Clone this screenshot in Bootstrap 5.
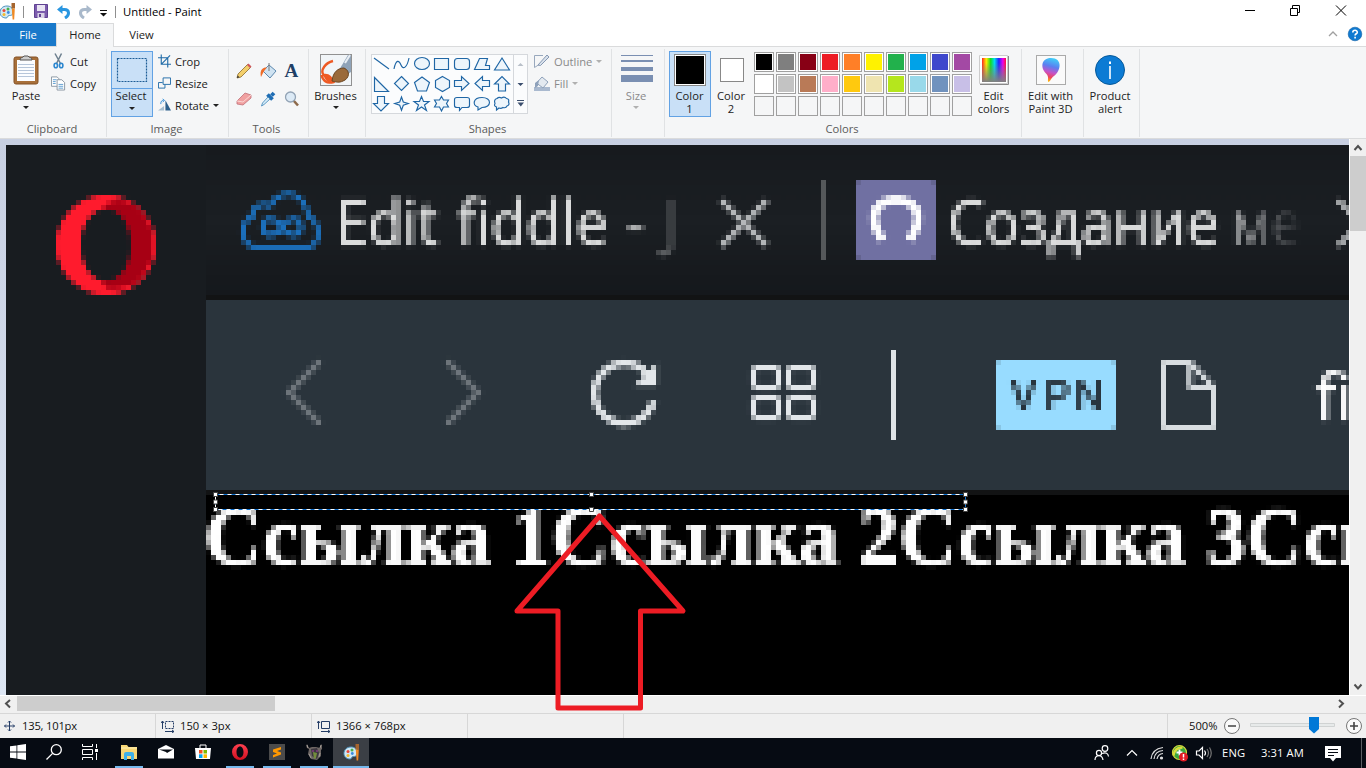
<!DOCTYPE html>
<html lang="en">
<head>
<meta charset="utf-8">
<title>Untitled - Paint</title>
<link href="https://cdn.jsdelivr.net/npm/bootstrap@5.3.0/dist/css/bootstrap.min.css" rel="stylesheet">
<script src="https://cdn.jsdelivr.net/npm/bootstrap@5.3.0/dist/js/bootstrap.bundle.min.js"></script>
<style>
body{width:1366px;height:768px;overflow:hidden;font-family:"Open Sans","Noto Sans",sans-serif;font-size:11.2px;line-height:13px;color:#222;background:#fff}
svg{display:block;flex:none}
.titlebar{height:23px;color:#000}
.titlebar .cap{font-size:11.3px}
.vline{width:1px;height:12px;background:#8f8f8f}
.tabstrip{height:24px;border-bottom:1px solid #dadbdc}
.rtab{height:24px;line-height:23px;text-align:center}
.rtab.file{width:56px;background:#1979ca;color:#fff;height:23px}
.rtab.on{width:58px;background:#f5f6f7;border:1px solid #dadbdc;border-bottom:0;line-height:21px}
.rtab.view{width:55px}
.ribbon{height:92px;background:#f5f6f7;border-bottom:1px solid #dadbdc}
.grp{height:88px;margin-top:2px;border-right:1px solid #e0e2e4}
.grp .inner{height:73px;padding-top:5px}
.grp .gname{text-align:center;color:#5a5a5a;height:13px;padding-right:2px}
.tool{text-align:center;display:flex;flex-direction:column;align-items:center}
.tool .ic{height:35px;display:flex;align-items:flex-start;justify-content:center}
.row-i{height:22px;display:flex;align-items:center;white-space:nowrap}
.row-i svg{margin-right:4px}
.caret{width:0;height:0;border:3px solid transparent;border-top-color:#222;border-bottom:0}
.dis{color:#8a8a8a}.dis .caret{border-top-color:#b0b0b0}
.pickd{background:#c9e0f7;outline:1px solid #62a2e4;outline-offset:-1px}
.palette{display:grid;grid-template-columns:repeat(10,20px);grid-auto-rows:20px;gap:2px}
.palette i{border:1px solid #a0a0a0;padding:1px;background-clip:content-box}
.palette i.e{background:none}
.palette i:not(.e){outline:1px solid #fff;outline-offset:-2px}
.work{height:556px;background:linear-gradient(#c8d0e2,#dde6f3)}
.vscroll{width:17px;background:#f0f0f0;border-left:1px solid #fff}
.vscroll .knob{height:75px;background:#cdcdcd}
.hscroll{height:18px;background:#f0f0f0;border-top:1px solid #fff}
.hscroll .knob{width:258px;height:15px;background:#cdcdcd}
.status{height:25px;background:#f0f0f0;border-top:1px solid #d7d7d7;color:#111}
.status .cell{height:24px;border-right:1px solid #d7d7d7}
.status span{margin-top:-2px}
.task{height:30px;background:#060b13;color:#fff}
.task span{margin-top:-2px}
.tb{width:37px;height:30px;display:flex;align-items:center;justify-content:center;border-bottom:2px solid transparent}
.tb.run{width:28px;margin:0 4.5px;border-color:#76b9ed}
.tb.act{width:36px;margin:0 0 0 .5px;background:#3b3f45;border-color:#76b9ed}
.annot{left:510px;top:505px;pointer-events:none}
</style>
</head>
<body class="d-flex flex-column position-relative">

<svg width="0" height="0" class="position-absolute">
 <defs>
  <filter id="px" filterUnits="userSpaceOnUse" primitiveUnits="userSpaceOnUse" x="6" y="145" width="1345" height="550" color-interpolation-filters="sRGB">
   <feGaussianBlur in="SourceGraphic" stdDeviation="1.1" result="soft"/>
   <feFlood x="8" y="147" width="1" height="1" flood-color="#000" result="dot"/>
   <feComposite in="dot" in2="dot" operator="over" x="6" y="145" width="5" height="5"/>
   <feTile x="6" y="145" width="1345" height="550" result="grid"/>
   <feComposite in="soft" in2="grid" operator="in" x="6" y="145" width="1345" height="550"/>
   <feMorphology operator="dilate" radius="2"/>
  </filter>
  <linearGradient id="bar" x1="0" y1="0" x2="0" y2="1"><stop offset="0" stop-color="#171a1e"/><stop offset=".5" stop-color="#1b1f23"/><stop offset="1" stop-color="#15181c"/></linearGradient>
  <linearGradient id="opr" x1="0" y1="0" x2="0" y2="1"><stop offset="0" stop-color="#ff4050"/><stop offset="1" stop-color="#d01020"/></linearGradient>
  <linearGradient id="fade1" gradientUnits="userSpaceOnUse" x1="615" y1="0" x2="690" y2="0"><stop offset="0" stop-color="#dcdddd"/><stop offset="1" stop-color="#1a1e22"/></linearGradient>
  <linearGradient id="fade2" gradientUnits="userSpaceOnUse" x1="1215" y1="0" x2="1303" y2="0"><stop offset="0" stop-color="#d0d1d2"/><stop offset="1" stop-color="#1a1e22"/></linearGradient>
  <linearGradient id="rain"><stop offset="0" stop-color="#f22"/><stop offset=".18" stop-color="#fe0"/><stop offset=".36" stop-color="#1d2"/><stop offset=".52" stop-color="#0de"/><stop offset=".7" stop-color="#22f"/><stop offset=".87" stop-color="#e0e"/><stop offset="1" stop-color="#f13"/></linearGradient>
  <linearGradient id="grayd" x1="0" y1="0" x2="0" y2="1"><stop offset=".2" stop-color="#808080" stop-opacity="0"/><stop offset="1" stop-color="#808080"/></linearGradient>
  <linearGradient id="p3d" x1=".6" y1="0" x2=".4" y2="1"><stop offset="0" stop-color="#3fd0f8"/><stop offset=".35" stop-color="#5b7ff0"/><stop offset=".6" stop-color="#c553c8"/><stop offset=".8" stop-color="#f0445c"/><stop offset="1" stop-color="#ffc400"/></linearGradient>
  <g id="palico"><path d="M7 3C2.500 3 0 6 0 9.500S3 15 6 15c2 0 1-2 3-2.500 2 0 4 0 4-4S10 3 7 3z" fill="#cfe8f5" stroke="#4f93bd"/><circle cx="4" cy="7.500" r="1.500" fill="#e8483c"/><circle cx="8" cy="6" r="1.500" fill="#49b04a"/><circle cx="4" cy="11.500" r="1.500" fill="#f5b92c"/><circle cx="8.300" cy="9.500" r="1.400" fill="#3a8be0"/><path d="M11.500 0h3.500v5.500h-3.500z" fill="#a5652f"/><path d="M11.800 5.500h3l-.6 11h-1.600z" fill="#f08a24"/></g>
 </defs>
</svg>

<!-- title bar -->
<div class="titlebar d-flex align-items-center">
 <svg width="17" height="18" viewBox="0 0 17 18"><use href="#palico" x="0" y="0"/></svg>
 <div class="vline" style="margin-left:6px"></div>
 <svg width="15" height="15" viewBox="0 0 15 15" style="margin-left:10px"><path d="M.5.500h13v13h-13z" fill="#7c5cad" stroke="#5f4192"/><path d="M3 1h8v6H3z" fill="#e9e4f3"/><path d="M3.500 9h7v5h-7z" fill="#d9d2e6"/><path d="M5 10h2v3H5z" fill="#5f4192"/></svg>
 <svg width="14" height="14" viewBox="0 0 14 14" style="margin-left:8px"><path d="M3 4.500h4.500c5 0 5.500 5.500.5 8.500" fill="none" stroke="#2a96e0" stroke-width="3"/><path d="M0 4.500L5.500 0v9z" fill="#2a96e0"/></svg>
 <svg width="14" height="14" viewBox="0 0 14 14" style="margin-left:7px"><path d="M11 4.500H6.500C1.500 4.500 1 10 6 13" fill="none" stroke="#a9b9cb" stroke-width="3"/><path d="M14 4.500L8.500 0v9z" fill="#a9b9cb"/></svg>
 <svg width="7" height="8" viewBox="0 0 7 8" style="margin-left:8px;margin-top:3px"><path d="M0 1.500h7" stroke="#111"/><path d="M0 4h7L3.500 7.500z" fill="#111"/></svg>
 <div class="vline" style="margin-left:8px"></div>
 <span class="cap" style="margin-left:7px">Untitled - Paint</span>
 <svg class="ms-auto" width="106" height="14" viewBox="0 0 106 14" style="margin-right:18px;margin-top:-3px" fill="none" stroke="#000"><path d="M3 7.500h10M48.500 5.500h7v7h-7zM50.500 5.500v-3h7v7h-2.500M94 2.500l10 10M104 2.500l-10 10"/></svg>
</div>
<div class="tabstrip d-flex">
 <div class="rtab file">File</div><div class="rtab on">Home</div><div class="rtab view">View</div>
 <svg class="ms-auto" width="40" height="22" viewBox="0 0 40 22"><path d="M3 13l4-4 4 4" fill="none" stroke="#a0a0a0" stroke-width="1.300"/><circle cx="29" cy="11" r="6.800" fill="#0f7ad1" stroke="#0b5ea5" stroke-width=".6"/><path d="M26.800 9.500c0-3 4.500-2.800 4.500-.3 0 1.600-2.200 1.500-2.200 3.200M29.100 13.800v1.600" stroke="#fff" stroke-width="1.600" fill="none"/></svg>
</div>

<!-- ribbon -->
<div class="ribbon d-flex">
 <div class="grp" style="width:107px">
  <div class="inner d-flex">
   <div class="tool" style="width:44px;margin-left:4px">
    <div class="ic"><svg width="26" height="32" viewBox="0 0 26 32"><rect x="1" y="3" width="24" height="27" rx="2" fill="#a8703a" stroke="#835125"/><path d="M4 6h18v21H4z" fill="#fbfdff"/><path d="M5 10.500h16M5 13.500h16M5 16.500h16M5 19.500h16M5 22.500h16" stroke="#b6c6da"/><path d="M7 6c0-3 3-2 4-4h4c1 2 4 1 4 4z" fill="#ccc" stroke="#555"/></svg></div>
    <div>Paste</div><div class="caret" style="margin-top:4px"></div>
   </div>
   <div style="margin-left:3px;margin-top:-4px">
    <div class="row-i"><svg width="15" height="16" viewBox="0 0 15 16"><path d="M4 0.500l5.500 10M10.500.500L5.500 10.500" stroke="#6d7f8e" stroke-width="1.500"/><g fill="none" stroke="#2c87cf" stroke-width="1.600"><ellipse cx="4.800" cy="12.500" rx="1.700" ry="2.300"/><ellipse cx="10.200" cy="12.500" rx="1.700" ry="2.300"/></g></svg>Cut</div>
    <div class="row-i"><svg width="15" height="16" viewBox="0 0 16 16"><g fill="#fff" stroke="#8995a1"><path d="M.5 1.500h6l2 2v8h-8z"/><path d="M6.500 4.500h5l3 3v8h-8z"/></g><path d="M2 4.500h4M2 6.500h3M2 8.500h3M8 9.500h5M8 11.500h5M8 13.500h5" stroke="#5f9ed0"/></svg>Copy</div>
   </div>
  </div><div class="gname">Clipboard</div>
 </div>
 <div class="grp" style="width:122px">
  <div class="inner d-flex">
   <div class="tool pickd" style="width:42px;height:66px;margin-left:4px;margin-top:-3px">
    <div class="ic" style="height:38px;width:42px;border-bottom:1px solid #62a2e4"><svg width="32" height="34" viewBox="0 0 32 34"><rect x="1.500" y="7.500" width="29" height="23" fill="none" stroke="#1d5c96" stroke-width="1.200" stroke-dasharray="2 1"/></svg></div>
    <div style="margin-right:2px">Select</div><div class="caret" style="margin-top:5px"></div>
   </div>
   <div style="margin-left:5px;margin-top:-4px">
    <div class="row-i"><svg width="13" height="14" viewBox="0 0 14 14" fill="none" stroke="#1f6ba8"><path d="M3.500 0v10.500H14M0 3.500h10.500V14M4 10l9-9" stroke-width="1.200"/></svg>Crop</div>
    <div class="row-i"><svg width="13" height="14" viewBox="0 0 14 14" fill="none" stroke="#1f6ba8"><path d="M5.500 1.500h8v7h-8zM5 6.500H.500v6h7V9"/></svg>Resize</div>
    <div class="row-i"><svg width="13" height="14" viewBox="0 0 14 14"><path d="M8 2v11h6z" fill="#2c5f8c"/><path d="M6.500 8v5H0z" fill="#a6bed0"/><path d="M3 6c0-3 1-4 3-4M5 .500L7 2 5 4" stroke="#2e8ad8" fill="none"/></svg>Rotate<div class="caret" style="margin-left:4px"></div></div>
   </div>
  </div><div class="gname">Image</div>
 </div>
 <div class="grp" style="width:80px">
  <div class="inner" style="padding-left:3px">
   <div style="display:grid;grid-template-columns:repeat(3,24px);grid-auto-rows:28px;justify-items:center;align-items:center;margin-top:3px">
    <svg width="16" height="16" viewBox="0 0 16 16"><path d="M1 15l1-4L11.500 1.500l3 3L5 14z" fill="#f3cf6b" stroke="#8a6b2c" stroke-width=".8"/><path d="M11 2l1.500-1.500 3 3L14 5z" fill="#d0555c"/><path d="M1 15l.7-2.500 1.800 1.800z" fill="#333"/></svg>
    <svg width="17" height="17" viewBox="0 0 17 17"><path d="M3 8l6-6 7 6-6 7z" fill="#cfe3f2" stroke="#5c88ae"/><path d="M1 14C-.5 8 2 4 7 4.500L4.500 7.500 3 10z" fill="#ef6c28"/><path d="M9 8V0" stroke="#777"/></svg>
    <svg width="20" height="24" viewBox="0 0 20 24"><text x="2.500" y="18" font-family="Liberation Serif,serif" font-weight="bold" font-size="19" fill="#1f3f66">A</text></svg>
    <svg width="16" height="14" viewBox="0 0 16 14"><path d="M1 9l8-8 6 2v3l-8 7-6-1z" fill="#f0a0a0" stroke="#c07078" stroke-width=".8"/><path d="M1 9l6 1 8-7" fill="none" stroke="#fbd6d4"/></svg>
    <svg width="16" height="16" viewBox="0 0 16 16"><path d="M7.500 3.500l5 5M11.500 4.500L14 2" stroke="#1f6db4" stroke-width="3.800"/><path d="M1.500 15l1-3L8 6l2 2-6 5.500z" fill="#d6ecf8" stroke="#3c84b8" stroke-width=".8"/></svg>
    <svg width="16" height="16" viewBox="0 0 16 16"><path d="M9.500 9.500L14 14.500" stroke="#8d6a4b" stroke-width="2.600"/><circle cx="6.500" cy="6" r="5" fill="#dceaf6" stroke="#92a3b5" stroke-width="1.300"/></svg>
   </div>
  </div><div class="gname" style="padding-right:4px">Tools</div>
 </div>
 <div class="grp" style="width:57px">
  <div class="inner"><div class="tool" style="padding-right:3px">
    <div class="ic"><svg width="32" height="32" viewBox="0 0 32 32"><rect x=".5" y=".5" width="31" height="31" fill="#f1f5f8" stroke="#919191"/><path d="M13 7C5 9 0.800 16 3 20c2 4 7 1 10 8-6 2-10-1-11.500-7" fill="none" stroke="#ee5a24" stroke-width="2.400"/><path d="M3 20q8-2 12 9-9 2-12-9z" fill="#ee5a24"/><path d="M19 16L28 1h3v17l-6 4z" fill="#8fa3b8"/><path d="M25 9l5-8" stroke="#e8eef4" stroke-width="2"/><path d="M12 27c1-9 6-13 12-13 7 3 5 11-1 13-4 2-7 1-11 0z" fill="#9a6a3b" stroke="#6b4521"/></svg></div>
    <div>Brushes</div><div class="caret" style="margin-top:4px"></div></div>
  </div>
 </div>
 <div class="grp" style="width:246px">
  <div class="inner d-flex">
   <svg width="157" height="60" viewBox="371 54 157 60" style="margin-left:5px">
    <rect x="371.500" y="54.500" width="156" height="59" fill="#fbfcfd" stroke="#d5d8dc"/><path d="M513.500 54v60" stroke="#d5d8dc"/>
    <g fill="#edf5fb" stroke="#1f66a5" stroke-width="1.150">
     <path d="M374 58l15 11"/><path d="M394 69c2-10 5-9 7-4s6 3 8-7" fill="none"/><ellipse cx="422" cy="63.500" rx="7.500" ry="6"/><path d="M434.500 58.500h14v11h-14z"/><rect x="454.500" y="58.500" width="15" height="11" rx="3"/><path d="M479.500 58.500h8l-2 7h4v4h-15z"/><path d="M502 58l7.500 12h-15z"/>
     <path d="M374.500 77.500v14h14z"/><path d="M401.500 76.500l7 7-7 7-7-7z"/><path d="M422 77l7.500 5.500-3 8.500h-9l-3-8.500z"/><path d="M442.500 76.500l7 4v7l-7 4-7-4v-7z"/><path d="M454.500 80.500h7v-4l7.500 7-7.500 7v-4h-7z"/><path d="M489.500 80.500h-7v-4l-7.500 7 7.500 7v-4h7z"/><path d="M498.500 91v-7h-4l7.500-7.500 7.500 7.500h-4v7z"/>
     <path d="M377.500 96.500v7h-4l7.500 7.500 7.500-7.500h-4v-7z"/><path d="M401.500 97l1.800 5 5 1.500-5 1.700-1.800 5-1.800-5-5-1.700 5-1.500z"/><path d="M421.500 96.500l2 5h5.500l-4.500 3.500 2 5.500-5-3.500-5 3.500 2-5.500-4.500-3.500h5.500z"/><path d="M441.500 96.500l2 3.500h5l-2 3.500 2 3.500h-5l-2 4-2-4h-5l2-3.500-2-3.500h5z"/><path d="M457 97.500h10q2.500 0 2.500 2v6q0 2-2.500 2h-5l-2.500 3v-3h-2.500q-2.500 0-2.500-2v-6q0-2 2.500-2z"/><path d="M482 97.500c10 0 10 10 0 10l-4 2.500v-3c-6-2-5-9.500 4-9.500z"/><path d="M497 98.500q2-2 4.500-.5 3-2 5 .5 3 .5 2 3.500 1.500 3-1.500 4-1 2.500-4 1.500-2 1.500-4 .5l-2.500 2v-3q-3-1-1.500-3.500-1.500-4 2-5z"/>
    </g>
    <path d="M517.500 66l3-3 3 3z" fill="#b9c0c9"/><path d="M517.500 83h6l-3 3zM517.500 102.500h6.500l-3.200 4z" fill="#3c4f6e"/><path d="M517 100.500h7" stroke="#3c4f6e"/>
   </svg>
   <div class="dis" style="margin-left:6px;margin-top:-4px">
    <div class="row-i"><svg width="16" height="14" viewBox="0 0 16 14"><path d="M9 1.500H.500v12L12 6" fill="none" stroke="#98a8bd"/><path d="M4 11L13 1l2 2-8.500 8.500z" fill="#d9e1eb" stroke="#8598b3"/></svg>Outline<div class="caret" style="margin-left:4px"></div></div>
    <div class="row-i"><svg width="16" height="16" viewBox="0 0 16 16"><path d="M0 12h16v4H0z" fill="#a9b9cf"/><path d="M2.500 8L8 2l6 5-5 6z" fill="#e3e9f0" stroke="#8ea1ba"/><path d="M1 13V8l4-3-1 6z" fill="#8ea1ba"/></svg>Fill<div class="caret" style="margin-left:4px"></div></div>
   </div>
  </div><div class="gname">Shapes</div>
 </div>
 <div class="grp" style="width:53px">
  <div class="inner dis"><div class="tool" style="padding-right:4px">
   <div class="ic"><svg width="32" height="30" viewBox="0 0 32 30" fill="#7a8fb2" style="margin-left:1px"><path d="M0 1h32v1H0zM0 6h32v2H0zM0 13h32v4H0zM0 21h32v7H0z"/></svg></div>
   <div>Size</div><div class="caret" style="margin-top:4px"></div></div>
  </div>
 </div>
 <div class="grp" style="width:357px">
  <div class="inner d-flex">
   <div class="tool pickd" style="width:42px;height:66px;margin-left:4px;margin-top:-3px;padding-top:3px"><div class="ic"><svg width="32" height="32" viewBox="0 0 32 32"><rect x=".5" y=".5" width="31" height="31" fill="#fff" stroke="#888"/><path d="M2 2h28v28H2z"/></svg></div><div style="margin-right:1px">Color<br>1</div></div>
   <div class="tool" style="width:41px"><div class="ic" style="padding-top:4px"><svg width="24" height="24" viewBox="0 0 24 24"><rect x=".5" y=".5" width="23" height="23" fill="#fff" stroke="#888"/></svg></div><div style="margin-right:1px">Color<br>2</div></div>
   <div class="palette" style="margin-left:2px;margin-top:-2px">
    <i style="background-color:#000"></i><i style="background-color:#7f7f7f"></i><i style="background-color:#880015"></i><i style="background-color:#ed1c24"></i><i style="background-color:#ff7f27"></i><i style="background-color:#fff200"></i><i style="background-color:#22b14c"></i><i style="background-color:#00a2e8"></i><i style="background-color:#3f48cc"></i><i style="background-color:#a349a4"></i>
    <i style="background-color:#fff"></i><i style="background-color:#c3c3c3"></i><i style="background-color:#b97a57"></i><i style="background-color:#ffaec9"></i><i style="background-color:#ffc90e"></i><i style="background-color:#efe4b0"></i><i style="background-color:#b5e61d"></i><i style="background-color:#99d9ea"></i><i style="background-color:#7092be"></i><i style="background-color:#c8bfe7"></i>
    <i class="e"></i><i class="e"></i><i class="e"></i><i class="e"></i><i class="e"></i><i class="e"></i><i class="e"></i><i class="e"></i><i class="e"></i><i class="e"></i>
   </div>
   <div class="tool" style="width:43px"><div class="ic" style="padding-top:1px"><svg width="30" height="30" viewBox="0 0 30 30"><path d="M.5.500h28v28H.500z" fill="#fff" stroke="#ccc"/><path d="M1 29.500h28.500V1" fill="none" stroke="#888"/><path d="M3 3h24v24H3z" fill="url(#rain)"/><path d="M3 3h24v24H3z" fill="url(#grayd)"/></svg></div><div>Edit<br>colors</div></div>
  </div><div class="gname">Colors</div>
 </div>
 <div class="grp" style="width:62px"><div class="inner"><div class="tool" style="padding-right:4px"><div class="ic" style="padding-top:1px"><svg width="30" height="30" viewBox="0 0 30 30"><rect x=".5" y=".5" width="29" height="29" fill="#fafafa" stroke="#aaa"/><path d="M15 3c12 0 10 13 3 18-3 2-4 6-5.500 6-1.500-1 1-5-2-8C4 13 5 3 15 3z" fill="url(#p3d)"/></svg></div><div class="text-nowrap">Edit with<br>Paint 3D</div></div></div></div>
 <div class="grp" style="width:56px"><div class="inner"><div class="tool" style="padding-right:3px"><div class="ic" style="padding-top:1px"><svg width="30" height="30" viewBox="0 0 30 30"><circle cx="15" cy="15" r="14.500" fill="#0c7bd4" stroke="#075999"/><path d="M14 6.500h2v2.500h-2zM14.200 11h1.600v13h-1.600z" fill="#fff"/></svg></div><div>Product<br>alert</div></div></div></div>
</div>

<!-- canvas and vertical scrollbar -->
<div class="work d-flex">
 <svg width="1343" height="550" viewBox="6 145 1343 550" style="margin:6px 0 0 6px">
  <g filter="url(#px)">
   <path d="M0 139h1366v562H0z" fill="#181c20"/>
   <path d="M206 145h1160v150H206z" fill="url(#bar)"/>
   <path d="M206 295h1160v5H206zM206 490h1160v5H206z" fill="#121314"/>
   <path d="M206 300h1160v190H206z" fill="#2a343c"/>
   <path d="M206 495h1160v206H206z" fill="#000"/>
   <path d="M106 195a50 50 0 1 0 0 100a50 50 0 1 0 0-100zm0 14c14 0 25 15 25 36s-11 36-25 36-25-15-25-36 11-36 25-36z" fill="#ff1b2d" fill-rule="evenodd"/>
   <path d="M106 209c14 0 25 15 25 36s-11 36-25 36c-4 0-5 0 0 7q16 2 29-5a50 50 0 0 0 0-77q-16-10-33 0z" fill="#a70014"/>
   <path d="M257 247c-18 0-17-27-5-30 0-10 8-15 18-11 8-17 34-18 38 10 14 6 13 31-1 31z" fill="none" stroke="#1b70bd" stroke-width="5"/>
   <path d="M282 227c-6-10-19-11-19 0s13 10 19 0 19-11 19 0-13 10-19 0z" fill="none" stroke="#1b70bd" stroke-width="5.500"/>
   <g font-family="Open Sans,Noto Sans,sans-serif" font-size="62" fill="#dcdddd" stroke-width="1">
    <text x="336" y="245" word-spacing="4" textLength="343" lengthAdjust="spacingAndGlyphs" fill="url(#fade1)" stroke="url(#fade1)">Edit fiddle - J</text>
    <text x="948" y="245" textLength="271" lengthAdjust="spacingAndGlyphs" stroke="#dcdddd">Создание</text>
    <text x="1231" y="245" textLength="70" lengthAdjust="spacingAndGlyphs" fill="url(#fade2)">ме</text>
    <text x="1315" y="420" font-size="64" fill="#fff" stroke="#fff">fi</text>
   </g>
   <path d="M721 200l46 46M767 200l-46 46M1338 200l46 46M1384 200l-46 46" stroke="#b4b7b9" stroke-width="5.500"/>
   <path d="M821 180h5v80h-5z" fill="#55585a"/>
   <rect x="856" y="180" width="80" height="80" rx="5" fill="#7070a2"/>
   <path d="M883 240C866 217 875 200 896 200s30 17 13 40" fill="none" stroke="#fff" stroke-width="8.500"/>
   <path d="M320 361l-31 31.500L320 424M447 361l31 31.500L447 424" fill="none" stroke="#6f767c" stroke-width="5.800"/>
   <path d="M653.500 401a30 30 0 1 1-6-27" fill="none" stroke="#e3e7ea" stroke-width="7"/>
   <path d="M656 365v20h-20z" fill="#e3e7ea" stroke="#e3e7ea" stroke-width="2"/>
   <g fill="none" stroke="#e3e7ea" stroke-width="5.500"><rect x="753.500" y="367.500" width="25" height="20" rx="5"/><rect x="788.500" y="367.500" width="25" height="20" rx="5"/><rect x="753.500" y="397.500" width="25" height="20" rx="5"/><rect x="788.500" y="397.500" width="25" height="20" rx="5"/></g>
   <path d="M891 350h5v90h-5z" fill="#dfe4e7"/>
   <rect x="996" y="360" width="120" height="70" rx="5" fill="#98dcff"/>
   <text y="410" x="1010 1044 1074" font-family="Roboto,sans-serif" font-weight="500" font-size="42" fill="#26323b">VPN</text>
   <path d="M1190 362.500h-26.500v65h50v-40L1190 362.500v25h23" fill="none" stroke="#d8dde0" stroke-width="5" stroke-linejoin="bevel"/>
   <g font-family="Liberation Serif,serif" font-weight="bold" font-size="82" fill="#fff" stroke="#fff" stroke-width=".8">
    <text x="204" y="564" textLength="347" lengthAdjust="spacingAndGlyphs">Ссылка 1</text><text x="551" y="564" textLength="348" lengthAdjust="spacingAndGlyphs">Ссылка 2</text><text x="899" y="564" textLength="347" lengthAdjust="spacingAndGlyphs">Ссылка 3</text><text x="1246" y="564" textLength="154" lengthAdjust="spacingAndGlyphs">Ссы</text>
   </g>
  </g>
  <path d="M215 495h751v15H215z" fill="#000"/>
  <path d="M215.500 494.500h750v15h-750z" fill="none" stroke="#fff"/>
  <path d="M215.500 494.500h750v15h-750z" fill="none" stroke="#0a6fd0" stroke-dasharray="4 4"/>
  <g fill="#fff" stroke="#444"><path d="M213.500 492.500h4v4h-4zM213.500 507.500h4v4h-4zM213.500 500h4v4h-4zM589.500 492.500h4v4h-4zM589.500 507.500h4v4h-4zM963.500 492.500h4v4h-4zM963.500 507.500h4v4h-4zM963.500 500h4v4h-4z"/></g>
 </svg>
 <div class="vscroll d-flex flex-column">
  <svg width="16" height="17" viewBox="0 0 16 17"><path d="M4.500 11l3.500-4 3.500 4" fill="none" stroke="#505050" stroke-width="2"/></svg>
  <div class="knob"></div>
  <svg class="mt-auto" width="16" height="17" viewBox="0 0 16 17"><path d="M4.500 6.500l3.500 4 3.500-4" fill="none" stroke="#505050" stroke-width="2"/></svg>
 </div>
</div>
<div class="hscroll d-flex align-items-start">
 <svg width="17" height="16" viewBox="0 0 17 16"><path d="M10 4L6 7.500l4 4" fill="none" stroke="#505050" stroke-width="2"/></svg>
 <div class="knob"></div>
 <svg class="ms-auto" width="17" height="16" viewBox="0 0 17 16" style="margin-right:17px"><path d="M7 4l4 3.500-4 4" fill="none" stroke="#505050" stroke-width="2"/></svg>
</div>

<!-- status bar -->
<div class="status d-flex align-items-center">
 <div class="cell d-flex align-items-center" style="width:156px;padding-left:4px"><svg width="12" height="12" viewBox="0 0 12 12" stroke="#243d66" fill="none"><path d="M5.500 1v10M.500 6h10M4 2.500L5.500 1 7 2.500M4 9.500L5.500 11 7 9.500M2 4.500L.500 6 2 7.500M9 4.500L10.500 6 9 7.500"/></svg><span style="margin-left:6px;letter-spacing:-.2px">135, 101px</span></div>
 <div class="cell d-flex align-items-center" style="width:156px;padding-left:5px"><svg width="14" height="13" viewBox="0 0 14 13" stroke="#243d66" fill="none"><path d="M4.500 1.500h8v7h-8z" stroke-dasharray="2 1"/><path d="M1.500 1v8M0 3l1.500-2L3 3M4 11.500h9M11 10l2 1.500-2 1.500"/></svg><span style="margin-left:5px">150 × 3px</span></div>
 <div class="cell d-flex align-items-center" style="width:156px;padding-left:5px"><svg width="14" height="13" viewBox="0 0 14 13" stroke="#243d66" fill="none"><path d="M4.500 1.500h8v7h-8z"/><path d="M1.500 1v8M0 3l1.500-2L3 3M4 11.500h9M11 10l2 1.500-2 1.500"/></svg><span style="margin-left:5px">1366 × 768px</span></div>
 <div class="cell" style="width:156px"></div>
 <div class="cell" style="width:544px"></div>
 <span style="margin-left:21px">500%</span>
 <svg class="ms-auto" width="142" height="24" viewBox="1224 714 142 24"><g fill="#fafafa" stroke="#777"><circle cx="1232" cy="726" r="7.500"/><circle cx="1354" cy="726" r="7.500"/></g><path d="M1228 726h8M1350 726h8M1354 722v8" stroke="#444" stroke-width="1.600"/><path d="M1250.500 723.500h84v3h-84z" fill="#e7eaea" stroke="#d0d3d3"/><path d="M1309 717h10v12l-5 4.500-5-4.500z" fill="#0078d7"/></svg>
</div>

<!-- taskbar -->
<div class="task d-flex align-items-center">
 <div class="tb" style="width:36px"><svg width="16" height="16" viewBox="0 0 16 16" fill="#fff"><path d="M0 2.300l6.500-.9v6.100H0zM7.300 1.300L16 0v7.500H7.300zM0 8.400h6.500v6.200L0 13.700zM7.300 8.400H16V16l-8.700-1.300z"/></svg></div>
 <div class="tb" style="width:36px"><svg width="16" height="16" viewBox="0 0 16 16" fill="none" stroke="#fff" stroke-width="1.300"><circle cx="10.300" cy="5.700" r="5"/><path d="M6.600 9.400L.500 15.500"/></svg></div>
 <div class="tb" style="width:36px"><svg width="16" height="16" viewBox="0 0 16 16" fill="none" stroke="#fff"><path d="M.5 0v2.500h10V0M.500 5.500h10v5H.500zM.500 16v-2.500h10V16M14.500 0v4M14.500 9v7"/><path d="M13 5h3v3h-3z" fill="#fff" stroke="none"/></svg></div>
 <div class="tb run" style="margin-left:7px"><svg width="16" height="15" viewBox="0 0 16 15"><path d="M0 0h6l1.500 2H16v12H0z" fill="#f8d775"/><path d="M0 3h16" stroke="#fff1b8"/><path d="M3 15V9q0-2 2-2h6q2 0 2 2v6h-3v-4H6v4z" fill="#3fb1e8"/></svg></div>
 <div class="tb"><svg width="16" height="14" viewBox="0 0 16 14"><path d="M0 4l8-4 8 4v9.500H0z" fill="#fff"/><path d="M1 4.500h14L9 8 8 7z" fill="#080d14"/></svg></div>
 <div class="tb"><svg width="16" height="16" viewBox="0 0 16 16"><path d="M0 4h16l-1 11H1z" fill="#fff"/><path d="M5 4V1h6v3" fill="none" stroke="#fff"/><path d="M4 6h3.500v3.500H4z" fill="#f25022"/><path d="M8.500 6H12v3.500H8.500z" fill="#7fba00"/><path d="M4 10.300h3.500V14H4z" fill="#00a4ef"/><path d="M8.500 10.300H12V14H8.500z" fill="#ffb900"/></svg></div>
 <div class="tb run"><svg width="16" height="16" viewBox="0 0 16 16"><path d="M8 0a8 8 0 1 0 0 16A8 8 0 1 0 8 0zm0 2.500c2.200 0 3.500 2.500 3.500 5.500S10.200 13.500 8 13.500 4.500 11 4.500 8 5.800 2.500 8 2.500z" fill="url(#opr)" fill-rule="evenodd"/></svg></div>
 <div class="tb run"><svg width="16" height="16" viewBox="0 0 16 16"><path d="M0 0h16v16H0z" fill="#4b4b4b"/><path d="M12 3v2.500L8 7l4 1.500v2L4 13.500V11l4-1.500-4-1.500V5.500z" fill="#ff9800"/></svg></div>
 <div class="tb run"><svg width="16" height="16" viewBox="0 0 16 16"><path d="M1 0q-2 4 2 5l-1 5 3 5 6 1 4-4v-6q3-2 0-6l-1 4-4-1H6L3 4z" fill="#6d6664"/><path d="M5 5l6-1 2 5-2 6-5-3z" fill="#3c3740"/><path d="M7 8l4 1-1 5-2 1z" fill="#738d3c"/><path d="M1 1l1 3M15 1l-1 3M3 10l2 4M14 9l-1 4" stroke="#a59e98"/><path d="M6 7h2M10 7h2" stroke="#a33ca0"/></svg></div>
 <div class="tb act"><svg width="17" height="17" viewBox="-1 0 17 17"><use href="#palico"/></svg></div>
 <svg class="ms-auto" width="120" height="30" viewBox="1093 738 120 30" fill="none" stroke="#fff" stroke-width="1.200">
  <circle cx="1105" cy="748.500" r="2.800"/><circle cx="1099" cy="753" r="2.600"/><path d="M1095 760q0-4 4-4.500 3.500.5 4 4.500M1102 753.500q6-2 6.500 3"/>
  <path d="M1127 755.500l5-5 5 5"/>
  <g stroke="#ddd"><path d="M1151 759q1-10 12-11.500M1154 759q1-8 9-8.500M1157 759q1-5 6-5.500"/><circle cx="1161.500" cy="758" r="1" fill="#fff"/></g>
  <circle cx="1179.500" cy="752.500" r="7" fill="#3aa63e" stroke="#d5d83b"/><path d="M1173.500 755.500q1-8 9-8" stroke="#d9dc3b" stroke-width="2.500"/><path d="M1176.500 752.500h6M1179.500 749.500v6" stroke="#fff" stroke-width="1.800"/><circle cx="1183.500" cy="757" r="4.500" fill="#e31b23" stroke="none"/><path d="M1183.500 754v3.500M1183.500 758.500v1.500" stroke-width="1.500"/>
  <path d="M1196.500 751h2.500l3.500-3.500v11L1199 755h-2.500zM1204.500 750.500q2 2.500 0 5"/><path d="M1207 749q3 4 0 8M1209.500 747.500q3.500 5.500 0 11" stroke="#777"/>
 </svg>
 <span style="margin-left:9px;width:30px;letter-spacing:.2px">ENG</span><span class="text-nowrap" style="margin-left:9px;width:46px;letter-spacing:.1px">3:31 AM</span>
 <svg width="17" height="17" viewBox="0 0 17 17" style="margin-left:18px"><path d="M0 1h16v12h-5l-3 3.500L5 13H0z" fill="#fff"/><path d="M3 4.500h10M3 7.500h10M3 10.500h6" stroke="#060b13"/></svg>
 <div style="width:1px;height:30px;background:#5a5e63;margin-left:19px;margin-right:4px"></div>
</div>

<!-- arrow drawn over the window -->
<svg class="annot position-absolute" width="180" height="210" viewBox="510 505 180 210"><path d="M599.500 516L683 611H640.500v97H558V611H517z" fill="none" stroke="#ed1c24" stroke-width="5" stroke-linejoin="round"/></svg>
</body>
</html>
